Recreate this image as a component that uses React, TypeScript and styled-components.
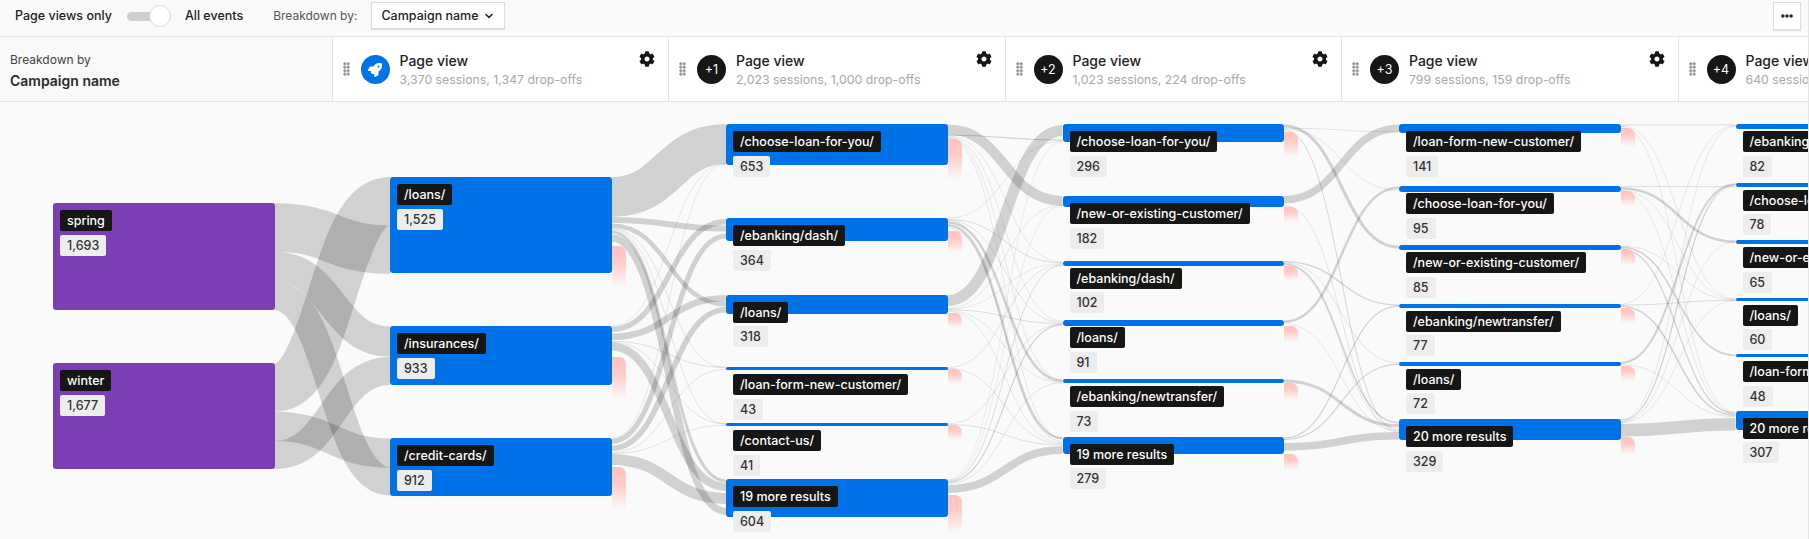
import styled, { createGlobalStyle } from "styled-components";
import { FaCog, FaEllipsisH, FaRocket } from "react-icons/fa";
import { ChevronDown } from "lucide-react";

const GlobalStyle = createGlobalStyle`
  html, body {
    margin: 0;
    padding: 0;
    height: 100%;
    overflow: hidden;
    background: #fafafa;
  }
  * {
    box-sizing: border-box;
  }
`;

const Page = styled.div`
  width: 1809px;
  height: 539px;
  display: flex;
  flex-direction: column;
  overflow: hidden;
  font-family: Inter, "Liberation Sans", sans-serif;
  color: #222;
  background: #fafafa;
  border-right: 1px solid #e6e6e6;
`;

const Toolbar = styled.div`
  height: 37px;
  flex: none;
  display: flex;
  align-items: flex-start;
  padding: 2px 7px 0 15px;
  border-bottom: 1px solid #e4e4e4;
  font-size: 12.5px;
`;

const ToolbarText = styled.span`
  line-height: 28px;
  font-weight: 500;
  color: #222;
  white-space: nowrap;
`;

const BreakdownPrompt = styled.span`
  margin-left: 30px;
  line-height: 28px;
  font-size: 12px;
  color: #555;
  white-space: nowrap;
`;

const Toggle = styled.span`
  position: relative;
  width: 44px;
  height: 9px;
  margin: 10px 14px 0 15px;
  border-radius: 5px;
  background: #cfcfcf;
`;

const ToggleKnob = styled.span`
  position: absolute;
  right: 0;
  top: -7px;
  width: 22px;
  height: 22px;
  border-radius: 50%;
  background: #fff;
  border: 1px solid #d8d8d8;
`;

const Select = styled.div`
  width: 134px;
  height: 27px;
  margin-left: 14px;
  padding: 0 9px;
  display: flex;
  align-items: center;
  justify-content: space-between;
  background: #fff;
  border: 1px solid #dcdcdc;
  box-shadow: 0 1px 1px rgba(0, 0, 0, 0.1);
  font-weight: 500;
  white-space: nowrap;
`;

const MoreButton = styled.div`
  width: 28px;
  height: 28px;
  margin-left: auto;
  display: flex;
  align-items: center;
  justify-content: center;
  background: #fff;
  border: 1px solid #dcdcdc;
  box-shadow: 0 1px 1px rgba(0, 0, 0, 0.1);
  color: #222;
`;

const StepRow = styled.div`
  height: 65px;
  flex: none;
  display: flex;
  border-bottom: 1px solid #e4e4e4;
`;

const BreakdownCell = styled.div`
  width: 331.5px;
  flex: none;
  padding: 14px 10px 0;
  background: #f9f9f9;
`;

const BreakdownLabel = styled.div`
  font-size: 12px;
  line-height: 17px;
  color: #444;
`;

const BreakdownValue = styled.div`
  margin-top: 4px;
  font-size: 14px;
  line-height: 18px;
  font-weight: 600;
  color: #2a2a2a;
`;

const StepCell = styled.div`
  position: relative;
  width: 336.5px;
  flex: none;
  display: flex;
  align-items: flex-start;
  padding: 18px 0 0 10px;
  background: #fff;
  border-left: 1px solid #e4e4e4;
`;

const Grip = styled.span`
  width: 7px;
  height: 14px;
  margin-top: 7px;
  flex: none;
  background-image: radial-gradient(circle, #8c8c8c 1.3px, transparent 1.5px);
  background-size: 3.5px 3.5px;
`;

const StepBadge = styled.span<{ $first?: boolean }>`
  width: 29px;
  height: 29px;
  margin-left: 11px;
  flex: none;
  display: flex;
  align-items: center;
  justify-content: center;
  border-radius: 50%;
  background: ${({ $first }) => ($first ? "#0073e6" : "#161616")};
  color: #fff;
  font-size: 12.5px;
`;

const StepText = styled.div`
  margin-left: 10px;
  white-space: nowrap;
`;

const StepTitle = styled.div`
  font-size: 14px;
  line-height: 18px;
  margin-top: -3px;
  font-weight: 500;
  color: #222;
`;

const StepSub = styled.div`
  margin-top: 1px;
  font-size: 12.3px;
  line-height: 17px;
  color: #a9a9a9;
`;

const GearSlot = styled.span`
  position: absolute;
  right: 13px;
  top: 14px;
  color: #161616;
  display: flex;
`;

const Canvas = styled.div`
  position: relative;
  flex: 1;
`;

const LinkLayer = styled.svg`
  position: absolute;
  inset: 0;
  display: block;
`;

const LinkPath = styled.path`
  fill: none;
  stroke: #000;
  stroke-opacity: 0.16;
`;

const Node = styled.div.attrs<{ $x: number; $y: number; $h: number }>(({ $x, $y, $h }) => ({
  style: { left: $x, top: $y, height: $h },
}))<{ $x: number; $y: number; $h: number; $purple?: boolean }>`
  position: absolute;
  width: 221.5px;
  border-radius: 3px;
  background: ${({ $purple }) => ($purple ? "#7d3db4" : "#0072e8")};
`;

const NodeContent = styled.div`
  position: relative;
  z-index: 1;
  padding: 7px;
  display: flex;
  flex-direction: column;
  align-items: flex-start;
  gap: 3.5px;
`;

const NodeLabel = styled.span`
  flex: none;
  height: 21px;
  padding: 0 7px;
  border-radius: 2px;
  background: #161616;
  color: #fff;
  font-size: 12.5px;
  font-weight: 500;
  line-height: 21px;
  white-space: nowrap;
`;

const NodeCount = styled.span`
  flex: none;
  height: 21px;
  padding: 0 7px;
  border-radius: 2px;
  background: #ededed;
  color: #333;
  font-size: 12.5px;
  font-weight: 500;
  line-height: 21px;
`;

const DropOff = styled.span.attrs<{ $top: number; $h: number }>(({ $top, $h }) => ({
  style: { top: $top, height: $h },
}))<{ $top: number; $h: number }>`
  position: absolute;
  left: 100%;
  width: 14px;
  border-radius: 0 7px 0 0;
  background: linear-gradient(#ffc1bc 0%, #ffcdc9 40%, rgba(255, 225, 222, 0) 100%);
`;

const CANVAS_TOP = 102;
const NODE_W = 221.5;

type NodeData = { label: string; count: string; top: number; bottom: number; dropTop?: number; dropBottom?: number };

const COLUMNS: { x: number; purple?: boolean; nodes: NodeData[] }[] = [
  {
    x: 53,
    purple: true,
    nodes: [
      { label: "spring", count: "1,693", top: 203.3, bottom: 310.3 },
      { label: "winter", count: "1,677", top: 363.3, bottom: 469 },
    ],
  },
  {
    x: 390,
    nodes: [
      { label: "/loans/", count: "1,525", top: 177, bottom: 273, dropTop: 245.7, dropBottom: 288 },
      { label: "/insurances/", count: "933", top: 326.3, bottom: 385, dropTop: 356.7, dropBottom: 400 },
      { label: "/credit-cards/", count: "912", top: 438.3, bottom: 495.7, dropTop: 466.7, dropBottom: 510 },
    ],
  },
  {
    x: 726,
    nodes: [
      { label: "/choose-loan-for-you/", count: "653", top: 124, bottom: 165, dropTop: 139.3, dropBottom: 180 },
      { label: "/ebanking/dash/", count: "364", top: 218.3, bottom: 241, dropTop: 230.7, dropBottom: 253 },
      { label: "/loans/", count: "318", top: 294.7, bottom: 314.3, dropTop: 313, dropBottom: 328 },
      { label: "/loan-form-new-customer/", count: "43", top: 367.3, bottom: 370, dropTop: 369, dropBottom: 384 },
      { label: "/contact-us/", count: "41", top: 423.3, bottom: 425.7, dropTop: 425, dropBottom: 440 },
      { label: "19 more results", count: "604", top: 479.3, bottom: 517, dropTop: 495, dropBottom: 533 },
    ],
  },
  {
    x: 1062.5,
    nodes: [
      { label: "/choose-loan-for-you/", count: "296", top: 124, bottom: 142.3, dropTop: 132, dropBottom: 157 },
      { label: "/new-or-existing-customer/", count: "182", top: 196, bottom: 207, dropTop: 207, dropBottom: 222 },
      { label: "/ebanking/dash/", count: "102", top: 260.7, bottom: 266.3, dropTop: 266, dropBottom: 281 },
      { label: "/loans/", count: "91", top: 320, bottom: 325.7, dropTop: 325.5, dropBottom: 342 },
      { label: "/ebanking/newtransfer/", count: "73", top: 379, bottom: 383, dropTop: 383, dropBottom: 400 },
      { label: "19 more results", count: "279", top: 436.7, bottom: 454, dropTop: 454, dropBottom: 470 },
    ],
  },
  {
    x: 1399,
    nodes: [
      { label: "/loan-form-new-customer/", count: "141", top: 124, bottom: 132.7, dropTop: 128, dropBottom: 147 },
      { label: "/choose-loan-for-you/", count: "95", top: 186, bottom: 191.7, dropTop: 191, dropBottom: 206 },
      { label: "/new-or-existing-customer/", count: "85", top: 245, bottom: 250.3, dropTop: 250, dropBottom: 265 },
      { label: "/ebanking/newtransfer/", count: "77", top: 303.7, bottom: 308, dropTop: 308, dropBottom: 323 },
      { label: "/loans/", count: "72", top: 361.7, bottom: 365.7, dropTop: 366, dropBottom: 381 },
      { label: "20 more results", count: "329", top: 419.3, bottom: 439.7, dropTop: 437, dropBottom: 455 },
    ],
  },
  {
    x: 1735.5,
    nodes: [
      { label: "/ebanking/dash/", count: "82", top: 124, bottom: 129 },
      { label: "/choose-loan-for-you/", count: "78", top: 182.7, bottom: 187.3 },
      { label: "/new-or-existing-customer/", count: "65", top: 240.3, bottom: 244 },
      { label: "/loans/", count: "60", top: 297.7, bottom: 301.3 },
      { label: "/loan-form-new-customer/", count: "48", top: 354.3, bottom: 357.3 },
      { label: "20 more results", count: "307", top: 410.7, bottom: 429.7 },
    ],
  },
];

// one list per gap between columns: [source top, thickness, target top]
const LINKS: [number, number, number][][] = [
  [
    [203.3, 48.4, 225.4],
    [251.7, 30, 326.5],
    [281.7, 28.6, 467],
    [363.3, 48.4, 177],
    [411.7, 29.3, 438.3],
    [441, 28, 357],
  ],
  [
    [177, 40, 124],
    [217, 6, 225.5],
    [223.5, 4.5, 302],
    [228.5, 0.6, 367.5],
    [229.3, 0.6, 424],
    [230.5, 3, 479.5],
    [234.5, 7, 508],
    [326, 0.5, 163.5],
    [326.6, 5.5, 219],
    [333.6, 6.5, 295],
    [341, 0.7, 366.8],
    [341.8, 0.6, 423.5],
    [342.6, 8, 483],
    [438.3, 0.5, 164],
    [439, 5, 233.5],
    [445.5, 5.5, 307],
    [452.5, 0.6, 369],
    [453.2, 0.6, 425],
    [453.9, 11, 493],
  ],
  [
    [124.5, 10, 196],
    [134.5, 1.2, 139.5],
    [135.7, 0.5, 262],
    [136.4, 0.5, 321],
    [137.1, 0.5, 380],
    [137.8, 0.5, 438],
    [218, 0.5, 141],
    [219, 0.8, 262.5],
    [220, 0.6, 322],
    [221, 2.5, 379.5],
    [224, 2.5, 437],
    [227.5, 0.6, 441],
    [295, 11, 125],
    [308, 0.5, 205],
    [308.7, 0.5, 263.5],
    [309.4, 0.8, 323],
    [310.3, 0.5, 382],
    [311, 0.5, 442.5],
    [367.3, 0.6, 264.5],
    [368, 0.6, 443.5],
    [423.5, 0.6, 324],
    [424.2, 0.7, 444.5],
    [479.5, 0.4, 141.5],
    [480.1, 0.4, 205.6],
    [480.7, 0.8, 265],
    [481.7, 1.2, 324],
    [483.2, 0.6, 382.5],
    [485, 8, 446],
  ],
  [
    [124.5, 3, 245.5],
    [128, 0.6, 131.5],
    [128.7, 0.5, 190],
    [129.4, 0.5, 430],
    [130.1, 0.5, 431],
    [196, 7.5, 124.5],
    [205, 0.6, 432],
    [261, 1.2, 304.5],
    [262.5, 0.6, 362.5],
    [263.3, 1.5, 422],
    [265.3, 0.5, 428],
    [320.5, 2.5, 186.5],
    [323.5, 0.5, 430.5],
    [379.5, 3, 424],
    [437.5, 1.2, 305.5],
    [439, 1.2, 363.5],
    [443, 7.5, 432],
  ],
  [
    [124.5, 0.8, 124.5],
    [125.4, 0.5, 298.5],
    [126, 0.5, 412],
    [186, 0.7, 186.4],
    [187, 2.5, 240.5],
    [190, 0.5, 299],
    [190.6, 0.5, 412.5],
    [245.5, 0.6, 299.7],
    [246.3, 1.6, 354.5],
    [248.3, 1.2, 413],
    [304, 0.5, 125.5],
    [304.6, 0.8, 300],
    [305.5, 1.6, 414.5],
    [362, 2, 183.2],
    [364.5, 0.6, 416.5],
    [419.5, 0.5, 126],
    [420.1, 0.8, 184],
    [421.1, 0.6, 185.5],
    [421.8, 0.5, 241.5],
    [422.5, 0.5, 300.5],
    [424, 12.5, 418],
  ],
];

const STEPS = [
  { badge: "", sub: "3,370 sessions, 1,347 drop-offs" },
  { badge: "+1", sub: "2,023 sessions, 1,000 drop-offs" },
  { badge: "+2", sub: "1,023 sessions, 224 drop-offs" },
  { badge: "+3", sub: "799 sessions, 159 drop-offs" },
  { badge: "+4", sub: "640 sessions, 130 drop-offs" },
];

function linkPath(gap: number, [sy, h, ty]: [number, number, number]) {
  const x0 = COLUMNS[gap].x + NODE_W;
  const x1 = COLUMNS[gap + 1].x;
  const xm = (x0 + x1) / 2;
  const y0 = sy + h / 2 - CANVAS_TOP;
  const y1 = ty + h / 2 - CANVAS_TOP;
  return `M${x0} ${y0}C${xm} ${y0} ${xm} ${y1} ${x1} ${y1}`;
}

export default function App() {
  return (
    <Page>
      <GlobalStyle />
      <Toolbar>
        <ToolbarText>Page views only</ToolbarText>
        <Toggle>
          <ToggleKnob />
        </Toggle>
        <ToolbarText>All events</ToolbarText>
        <BreakdownPrompt>Breakdown by:</BreakdownPrompt>
        <Select>
          Campaign name
          <ChevronDown size={12} strokeWidth={3} />
        </Select>
        <MoreButton>
          <FaEllipsisH size={12} />
        </MoreButton>
      </Toolbar>

      <StepRow>
        <BreakdownCell>
          <BreakdownLabel>Breakdown by</BreakdownLabel>
          <BreakdownValue>Campaign name</BreakdownValue>
        </BreakdownCell>
        {STEPS.map((step, i) => (
          <StepCell key={i}>
            <Grip />
            <StepBadge $first={i === 0}>{i === 0 ? <FaRocket size={14} /> : step.badge}</StepBadge>
            <StepText>
              <StepTitle>Page view</StepTitle>
              <StepSub>{step.sub}</StepSub>
            </StepText>
            <GearSlot>
              <FaCog size={16} />
            </GearSlot>
          </StepCell>
        ))}
      </StepRow>

      <Canvas>
        <LinkLayer width={1809} height={437}>
          {LINKS.map((links, gap) =>
            links.map((link, i) => <LinkPath key={`${gap}-${i}`} d={linkPath(gap, link)} strokeWidth={link[1]} />)
          )}
        </LinkLayer>
        {COLUMNS.map((column) =>
          column.nodes.map((node) => (
            <Node
              key={`${column.x}-${node.label}`}
              $x={column.x}
              $y={node.top - CANVAS_TOP}
              $h={node.bottom - node.top}
              $purple={column.purple}
            >
              {node.dropTop !== undefined && node.dropBottom !== undefined && (
                <DropOff $top={node.dropTop - node.top} $h={node.dropBottom - node.dropTop} />
              )}
              <NodeContent>
                <NodeLabel>{node.label}</NodeLabel>
                <NodeCount>{node.count}</NodeCount>
              </NodeContent>
            </Node>
          ))
        )}
      </Canvas>
    </Page>
  );
}
